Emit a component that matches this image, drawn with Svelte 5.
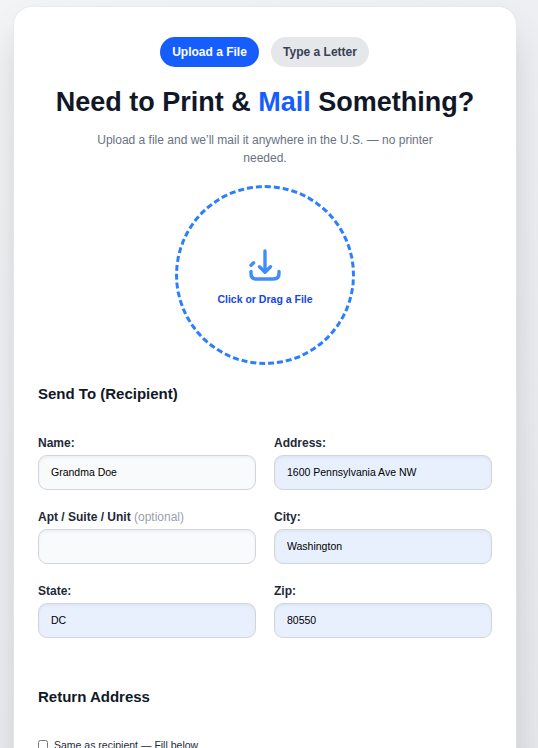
<script lang="ts">
  type Field = { id: string; label: string; value: string; optional?: boolean; filled?: boolean };

  let mode = $state('upload');
  let sameAsRecipient = $state(false);

  let fields: Field[] = $state([
    { id: 'name', label: 'Name:', value: 'Grandma Doe' },
    { id: 'address', label: 'Address:', value: '1600 Pennsylvania Ave NW', filled: true },
    { id: 'unit', label: 'Apt / Suite / Unit', value: '', optional: true },
    { id: 'city', label: 'City:', value: 'Washington', filled: true },
    { id: 'state', label: 'State:', value: 'DC', filled: true },
    { id: 'zip', label: 'Zip:', value: '80550', filled: true }
  ]);
</script>

<div class="page">
  <main class="card">
    <div class="tabs">
      <button class="tab" class:active={mode === 'upload'} onclick={() => (mode = 'upload')}>Upload a File</button>
      <button class="tab" class:active={mode === 'letter'} onclick={() => (mode = 'letter')}>Type a Letter</button>
    </div>

    <h1>Need to Print &amp; <span class="accent">Mail</span> Something?</h1>
    <p class="intro">Upload a file and we’ll mail it anywhere in the U.S. — no printer needed.</p>

    <button class="dropzone">
      <svg class="dropIcon" viewBox="0 0 36 36" fill="none" stroke="currentColor" stroke-width="3.4" stroke-linecap="round" stroke-linejoin="round">
        <path d="M18 4v21M12.500 19.800l5.500 5.400 5.500-5.400" />
        <path d="M4 24.500v2c0 4 2 5.500 5.500 5.500h17c3.500 0 5.500-1.500 5.500-5.500v-2" />
        <path d="M4 18.300l2.600-2.500" />
      </svg>
      <span class="dropText">Click or Drag a File</span>
    </button>

    <h2>Send To (Recipient)</h2>
    <div class="fields">
      {#each fields as field (field.id)}
        <div class="field">
          <label for={field.id}>{field.label}{#if field.optional}<span class="optional">&nbsp;(optional)</span>{/if}</label>
          <input id={field.id} class:filled={field.filled} bind:value={field.value} />
        </div>
      {/each}
    </div>

    <h2 class="returnTitle">Return Address</h2>
    <label class="same">
      <input type="checkbox" bind:checked={sameAsRecipient} />
      <span>Same as recipient — Fill below</span>
    </label>
  </main>
</div>

<style>
  :global(body) {
    font-family: 'Liberation Sans', Arial, sans-serif;
    overflow: hidden;
  }

  .page {
    box-sizing: border-box;
    height: 748px;
    padding: 7px 22px 0 14px;
    overflow: hidden;
    background: linear-gradient(135deg, #f3f4f6, #e5e7eb);
  }

  .card {
    box-sizing: border-box;
    height: 1000px;
    padding: 30px 24px;
    border-radius: 18px;
    background: #fff;
    box-shadow:
      0 0 0 1px rgba(229, 231, 235, 0.6),
      0 19px 38px -9px rgba(0, 0, 0, 0.22);
  }

  .tabs {
    display: flex;
    justify-content: center;
    gap: 12px;
    padding-right: 1px;
  }

  .tab {
    width: 98px;
    height: 30px;
    padding: 0;
    border: none;
    border-radius: 15px;
    background: #e5e7eb;
    color: #364153;
    font: bold 12px 'Liberation Sans', Arial, sans-serif;
  }

  .tab.active {
    width: 99px;
    background: #155dfc;
    color: #fff;
  }

  h1 {
    margin: 18px 0 0;
    text-align: center;
    white-space: nowrap;
    font-size: 27px;
    line-height: 34px;
    color: #101828;
  }

  .accent {
    color: #155dfc;
  }

  .intro {
    width: 336px;
    margin: 12px auto 0;
    text-align: center;
    font-size: 12px;
    line-height: 18px;
    color: #6a7282;
  }

  .dropzone {
    display: flex;
    flex-direction: column;
    align-items: center;
    justify-content: center;
    box-sizing: border-box;
    width: 180px;
    height: 180px;
    margin: 18px auto 0;
    padding: 4px 0 0;
    border: 3px dashed #2b7fff;
    border-radius: 50%;
    background: none;
  }

  .dropIcon {
    width: 36px;
    height: 36px;
    color: #3f8cff;
  }

  .dropText {
    margin-top: 9px;
    font: bold 10.5px/15px 'Liberation Sans', Arial, sans-serif;
    color: #1447e6;
  }

  h2 {
    margin: 18px 0 0;
    font-size: 15px;
    line-height: 22px;
    color: #101828;
  }

  .fields {
    display: grid;
    grid-template-columns: 1fr 1fr;
    gap: 18px;
    margin-top: 29px;
  }

  .field label {
    display: block;
    margin-bottom: 3px;
    font-size: 12px;
    font-weight: bold;
    line-height: 18px;
    color: #1e2939;
  }

  .field .optional {
    font-weight: normal;
    color: #99a1af;
  }

  .field input {
    display: block;
    box-sizing: border-box;
    width: 100%;
    height: 35px;
    padding: 0 12px 1px;
    border: 1px solid #d1d5dc;
    border-radius: 9px;
    background: #f9fafb;
    box-shadow: inset 0 1.5px 3px rgba(0, 0, 0, 0.05);
    font: 10.5px 'Liberation Sans', Arial, sans-serif;
    color: #000;
  }

  .field input.filled {
    background: #e8f0fe;
  }

  h2.returnTitle {
    margin-top: 48px;
  }

  .same {
    display: flex;
    align-items: center;
    gap: 6px;
    margin-top: 28px;
    font-size: 10.5px;
    line-height: 18px;
    color: #1e2939;
  }

  .same input {
    width: 10px;
    height: 10px;
    margin: 0;
  }
</style>
